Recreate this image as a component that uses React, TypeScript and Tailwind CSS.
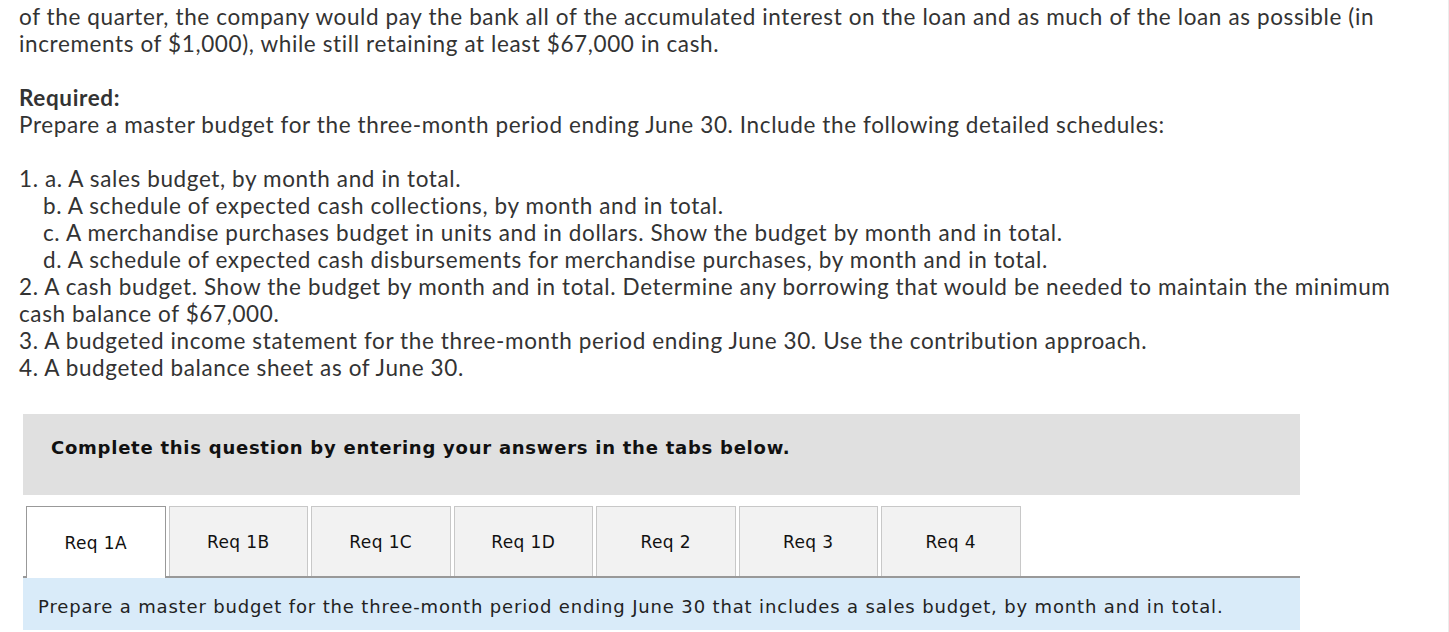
const tabs = ["Req 1A", "Req 1B", "Req 1C", "Req 1D", "Req 2", "Req 3", "Req 4"];

export default function App() {
  return (
    <div className="h-[632px] w-[1449px] overflow-hidden bg-white">
      <div className="h-full border-r border-[#ececec] pl-[19px] pr-[20px] pt-[3px]">
        <div className="font-['Lato',sans-serif] text-[22.5px] leading-[27px] tracking-[0.62px] text-[#333]">
          <p>
            of the quarter, the company would pay the bank all of the accumulated interest on the loan and as much of the
            loan as possible (in increments of $1,000), while still retaining at least $67,000 in cash.
          </p>
          <p className="mt-[27px] font-bold">Required:</p>
          <p>Prepare a master budget for the three-month period ending June 30. Include the following detailed schedules:</p>
          <div className="mt-[27px]">
            <p>1. a. A sales budget, by month and in total.</p>
            <div className="pl-[24px]">
              <p>b. A schedule of expected cash collections, by month and in total.</p>
              <p>c. A merchandise purchases budget in units and in dollars. Show the budget by month and in total.</p>
              <p>d. A schedule of expected cash disbursements for merchandise purchases, by month and in total.</p>
            </div>
            <p>
              2. A cash budget. Show the budget by month and in total. Determine any borrowing that would be needed to
              maintain the minimum cash balance of $67,000.
            </p>
            <p>3. A budgeted income statement for the three-month period ending June 30. Use the contribution approach.</p>
            <p>4. A budgeted balance sheet as of June 30.</p>
          </div>
        </div>

        <div className="ml-[4px] mt-[33px] w-[1277px] font-['DejaVu_Sans',Verdana,sans-serif] text-[#111]">
          <div className="h-[81px] bg-[#e0e0e0] pl-[28px] pt-[22px] text-[18px] leading-[24px] font-bold tracking-[0.75px]">
            Complete this question by entering your answers in the tabs below.
          </div>
          <div className="mt-[11px] flex gap-[3px] border-b-2 border-[#999] pl-[3px]">
            {tabs.map((t, i) => (
              <div
                key={t}
                className={
                  i === 0
                    ? "-mb-[2px] flex h-[72px] w-[139.5px] items-center justify-center border border-b-0 border-[#999] bg-white pt-[2px] text-[17px] tracking-[0.4px]"
                    : "flex h-[70px] w-[139.5px] items-center justify-center border border-b-0 border-[#c8c8c8] bg-[#f2f2f2] pt-[2px] text-[17px] tracking-[0.4px]"
                }
              >
                {t}
              </div>
            ))}
          </div>
          <div className="h-[52px] bg-[#d9ebf9] pl-[15px] pt-[18px] text-[18px] leading-[22px] tracking-[0.85px] text-[#222]">
            Prepare a master budget for the three-month period ending June 30 that includes a sales budget, by month and in
            total.
          </div>
        </div>
      </div>
    </div>
  );
}
